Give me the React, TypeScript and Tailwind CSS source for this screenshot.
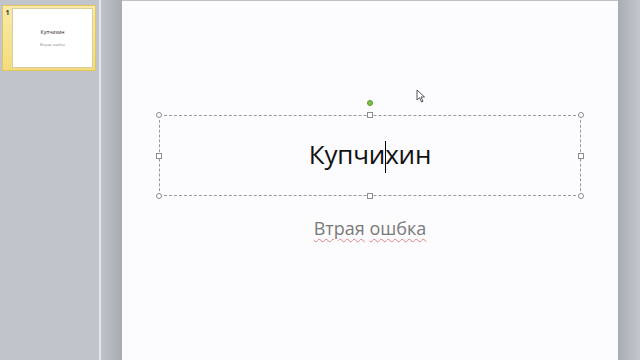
import React from 'react';

const Handle = ({ round, className }: { round?: boolean; className: string }) => (
  <span
    className={`absolute w-[6px] h-[6px] border border-[#8c8c8c] bg-white ${round ? 'rounded-full' : ''} ${className}`}
  />
);

const MouseArrow = () => (
  <svg width="10" height="14" viewBox="0 0 10 14" className="absolute left-[294px] top-[88px]">
    <path d="M1 1 L1 11 L3.5 8.7 L5.5 13 L7 12.3 L5 8 L8.5 8 Z" fill="white" stroke="#444" strokeWidth="0.9" strokeLinejoin="round" />
  </svg>
);

export default function App() {
  return (
    <div className="flex h-[360px] w-[640px] overflow-hidden bg-[#c0c3c9]" style={{ fontFamily: '"Open Sans", "Noto Sans", sans-serif' }}>
      {/* slides pane */}
      <div className="w-[99px] bg-[#c1c4ca] pt-[5px] pl-[2px]">
        <div className="flex h-[66px] w-[94px] bg-gradient-to-b from-[#f8eaa6] to-[#f3dc7c] border border-[#e2c560]">
          <div className="w-[9px] pt-[3px] text-[7px] leading-none text-[#333] text-center font-bold">1</div>
          <div className="flex-1 my-[2px] mr-[2px] bg-white border border-[#d8cfa0] flex flex-col items-center pt-[21px]">
            <div className="text-[5px] leading-none text-[#222]">Купчихин</div>
            <div className="text-[4px] leading-none text-[#888] mt-[8px]">Втрая ошбка</div>
          </div>
        </div>
      </div>
      <div className="w-[2px] bg-[#e4e6ea]" />
      {/* editing area */}
      <div className="flex flex-1 bg-[#bec1c7]">
        <div className="w-[21px] bg-gradient-to-r from-[#bfc2c8] to-[#a8abb1]" />
        <div className="relative mt-[1px] w-[496px] bg-[#fcfcfe]">
          <MouseArrow />
          <div className="ml-[37px] mt-[114px] flex flex-col items-center w-[422px]">
            <div className="relative h-[81px] w-[422px] border border-dashed border-[#9a9a9a] flex items-center justify-center">
              <span className="absolute left-1/2 -translate-x-1/2 top-[-16px] w-[6px] h-[6px] rounded-full bg-[#7cc04a] border border-[#5a9a2e]" />
              <Handle round className="-left-[4px] -top-[4px]" />
              <Handle round className="-right-[4px] -top-[4px]" />
              <Handle round className="-left-[4px] -bottom-[4px]" />
              <Handle round className="-right-[4px] -bottom-[4px]" />
              <Handle className="left-1/2 -translate-x-1/2 -top-[4px]" />
              <Handle className="left-1/2 -translate-x-1/2 -bottom-[4px]" />
              <Handle className="-left-[4px] top-1/2 -translate-y-1/2" />
              <Handle className="-right-[4px] top-1/2 -translate-y-1/2" />
              <div className="text-[26px] leading-none text-[#111] tracking-[-0.2px] pt-[3px]">
                Купчи<span className="inline-block w-[1px] h-[32px] bg-black align-middle -mx-[0.5px]" />хин
              </div>
            </div>
            <div className="mt-[23px] text-[18px] leading-none text-[#7a7a7a]">
              <span className="underline decoration-wavy decoration-[#e08080] decoration-1 underline-offset-[3px]">Втрая</span>{' '}
              <span className="underline decoration-wavy decoration-[#e08080] decoration-1 underline-offset-[3px]">ошбка</span>
            </div>
          </div>
        </div>
        <div className="w-[22px] bg-gradient-to-r from-[#a9acb2] to-[#c3c6cc]" />
      </div>
    </div>
  );
}
